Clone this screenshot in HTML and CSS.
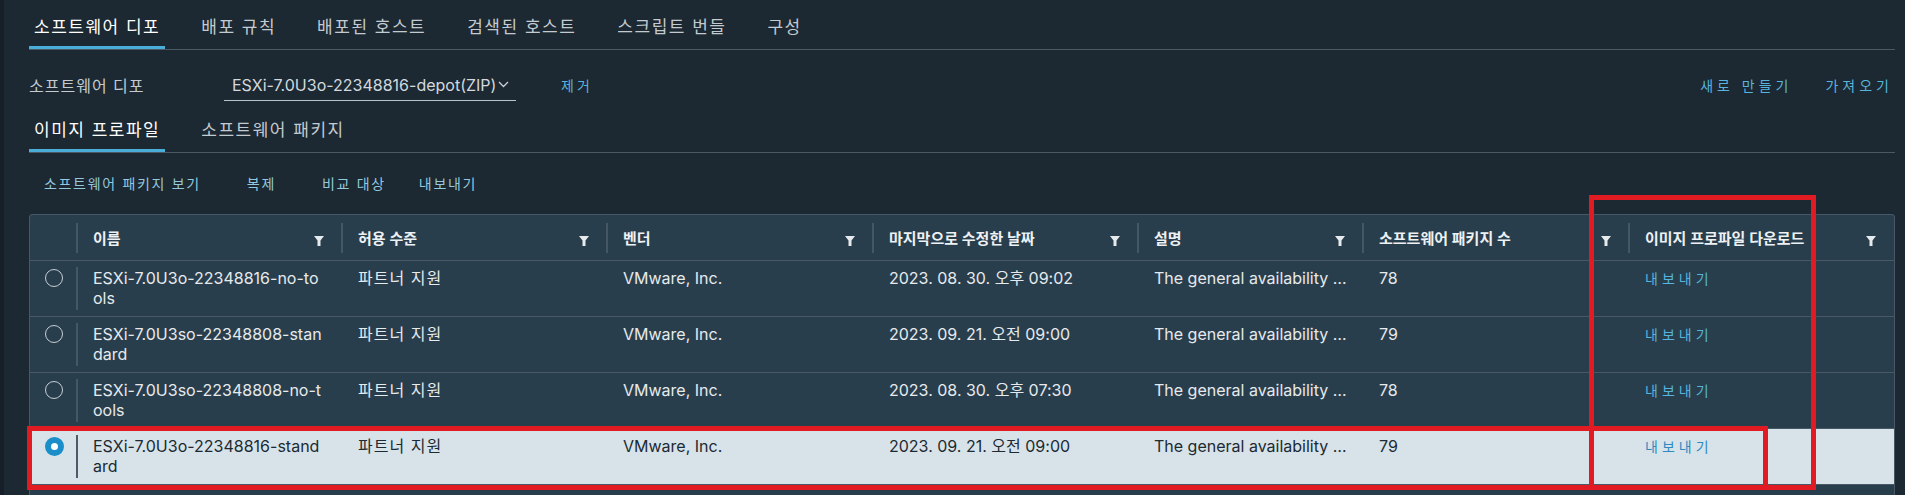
FILE: index.html
```html
<!DOCTYPE html>
<html lang="ko">

<head>
    <meta charset="UTF-8">
    <meta name="viewport" content="width=device-width, initial-scale=1.0">
    <title>이미지 빌더</title>
    <link rel="stylesheet" href="styles.css">
</head>

<body>
    <div class="page">
        <!-- 상단 탭 -->
        <nav class="tabs">
            <a class="tab active">소프트웨어 디포</a>
            <a class="tab">배포 규칙</a>
            <a class="tab">배포된 호스트</a>
            <a class="tab">검색된 호스트</a>
            <a class="tab">스크립트 번들</a>
            <a class="tab">구성</a>
        </nav>

        <div class="depot-row">
            <span class="depot-label">소프트웨어 디포</span>
            <div class="select">
                <span>ESXi-7.0U3o-22348816-depot(ZIP)</span>
                <svg width="11" height="7" viewBox="0 0 11 7"><path d="M1 1l4.5 4.5L10 1" fill="none" stroke="#c9d1d7" stroke-width="1.3"/></svg>
            </div>
            <a class="link remove">제거</a>
            <div class="depot-actions">
                <a class="link">새로 만들기</a>
                <a class="link">가져오기</a>
            </div>
        </div>

        <nav class="tabs sub">
            <a class="tab active">이미지 프로파일</a>
            <a class="tab">소프트웨어 패키지</a>
        </nav>

        <div class="actions">
            <a class="act first">소프트웨어 패키지 보기</a>
            <a class="act">복제</a>
            <a class="act">비교 대상</a>
            <a class="act last">내보내기</a>
        </div>

        <div class="datagrid">
            <div class="dg-head">
                <div class="hcell sel"></div>
                <div class="hcell">이름<i class="filter"></i></div>
                <div class="hcell">허용 수준<i class="filter"></i></div>
                <div class="hcell">벤더<i class="filter"></i></div>
                <div class="hcell">마지막으로 수정한 날짜<i class="filter"></i></div>
                <div class="hcell">설명<i class="filter"></i></div>
                <div class="hcell">소프트웨어 패키지 수<i class="filter"></i></div>
                <div class="hcell">이미지 프로파일 다운로드<i class="filter"></i></div>
            </div>

            <div class="dg-row">
                <div class="cell sel"><span class="radio"></span></div>
                <div class="cell">ESXi-7.0U3o-22348816-no-to<br>ols</div>
                <div class="cell ko">파트너 지원</div>
                <div class="cell">VMware, Inc.</div>
                <div class="cell">2023. 08. 30. 오후 09:02</div>
                <div class="cell">The general availability …</div>
                <div class="cell">78</div>
                <div class="cell"><a class="link">내보내기</a></div>
            </div>
            <div class="dg-row">
                <div class="cell sel"><span class="radio"></span></div>
                <div class="cell">ESXi-7.0U3so-22348808-stan<br>dard</div>
                <div class="cell ko">파트너 지원</div>
                <div class="cell">VMware, Inc.</div>
                <div class="cell">2023. 09. 21. 오전 09:00</div>
                <div class="cell">The general availability …</div>
                <div class="cell">79</div>
                <div class="cell"><a class="link">내보내기</a></div>
            </div>
            <div class="dg-row">
                <div class="cell sel"><span class="radio"></span></div>
                <div class="cell">ESXi-7.0U3so-22348808-no-t<br>ools</div>
                <div class="cell ko">파트너 지원</div>
                <div class="cell">VMware, Inc.</div>
                <div class="cell">2023. 08. 30. 오후 07:30</div>
                <div class="cell">The general availability …</div>
                <div class="cell">78</div>
                <div class="cell"><a class="link">내보내기</a></div>
            </div>
            <div class="dg-row selected">
                <div class="cell sel"><span class="radio checked"></span></div>
                <div class="cell">ESXi-7.0U3o-22348816-stand<br>ard</div>
                <div class="cell ko">파트너 지원</div>
                <div class="cell">VMware, Inc.</div>
                <div class="cell">2023. 09. 21. 오전 09:00</div>
                <div class="cell">The general availability …</div>
                <div class="cell">79</div>
                <div class="cell"><a class="link">내보내기</a></div>
            </div>
            <div class="dg-foot"></div>
        </div>

        <!-- 강조 표시 박스 -->
        <div class="mark mark-col"></div>
        <div class="mark mark-row"></div>
    </div>
</body>

</html>
```
FILE: styles.css
```css
body {
    margin: 0;
    background: #161f27;
    font-family: "Inter", "Noto Sans CJK KR", sans-serif;
    color: #e6eaed;
}

.page {
    position: relative;
    margin-left: 4px;
    padding: 0 10px 0 25px;
    height: 495px;
    overflow: hidden;
    background: #1c2832;
}

a {
    cursor: pointer;
}

/* 탭 */
.tabs {
    display: flex;
    gap: 31px;
    border-bottom: 1px solid #4b5965;
}

.tab {
    padding: 16px 5px 11px;
    font-size: 17px;
    line-height: 22px;
    letter-spacing: 1.5px;
    color: #c3cbd1;
}

.tab.active {
    color: #fff;
    box-shadow: inset 0 -3px 0 #49afd9;
}

.tabs.sub .tab {
    padding-top: 18px;
}

/* 디포 선택 줄 */
.depot-row {
    display: flex;
    align-items: center;
    margin-top: 19px;
    height: 32px;
}

.depot-label {
    width: 195px;
    font-size: 16px;
    letter-spacing: 1px;
    color: #c3cbd1;
}

.select {
    display: flex;
    align-items: center;
    gap: 2px;
    width: 284px;
    height: 31px;
    padding-left: 8px;
    border-bottom: 1px solid #b9c3ca;
    font-size: 16px;
    color: #d3d9de;
    white-space: nowrap;
}

.link {
    font-size: 14px;
    letter-spacing: 4px;
    color: #57b4dc;
}

.remove {
    margin-left: 45px;
    letter-spacing: 3px;
}

.depot-actions {
    display: flex;
    gap: 33px;
    margin-left: auto;
    padding-right: 2px;
}

/* 동작 버튼 */
.actions {
    display: flex;
    margin-top: 12px;
    height: 36px;
    align-items: center;
}

.act {
    padding: 0 23px;
    font-size: 14px;
    letter-spacing: .12em;
    color: #93c8df;
}

.act.first {
    padding-left: 15px;
}

.act.last {
    padding-left: 10px;
}

/* 데이터 그리드 */
.datagrid {
    margin-top: 13px;
    border: 1px solid #495865;
    border-radius: 3px;
    background: #293e4c;
}

.dg-head,
.dg-row {
    display: grid;
    grid-template-columns: 47px 265px 265px 266px 265px 225px 266px 1fr;
    border-bottom: 1px solid #495865;
}

.hcell {
    position: relative;
    display: flex;
    align-items: center;
    height: 45px;
    padding-left: 16px;
    font-size: 15px;
    font-weight: 600;
    color: #eef1f3;
}

.hcell::before {
    content: "";
    position: absolute;
    left: -1px;
    top: 8px;
    bottom: 7px;
    width: 2px;
    background: #465764;
}

.hcell.sel::before {
    display: none;
}

.filter {
    position: absolute;
    right: 18px;
    top: 21px;
    width: 10px;
    height: 10px;
    background: #e6eaed;
    clip-path: polygon(0 0, 100% 0, 65% 45%, 65% 100%, 35% 100%, 35% 45%);
}

.dg-row {
    height: 55px;
}

.cell {
    position: relative;
    padding: 7px 16px 0;
    font-size: 16px;
    line-height: 20px;
    white-space: nowrap;
}

.cell.ko {
    letter-spacing: 1px;
}

.cell.sel {
    padding: 8px 0 0 15px;
}

.cell.sel::after {
    content: "";
    position: absolute;
    right: -1px;
    top: 6px;
    bottom: 6px;
    width: 2px;
    background: #465764;
}

.radio {
    display: block;
    width: 16px;
    height: 16px;
    border: 1.5px solid #c6cdd3;
    border-radius: 50%;
}

.radio.checked {
    width: 7px;
    height: 7px;
    border: 6px solid #1a8ec8;
    background: #fff;
}

.dg-row.selected {
    background: #d8e3e9;
    color: #1c2a33;
}

.dg-row.selected .cell.sel::after {
    background: #4d5b66;
}

.dg-row.selected .link {
    color: #2c8ac1;
}

.dg-foot {
    height: 40px;
}

/* 빨간 강조 박스 */
.mark {
    position: absolute;
    border: 5px solid #e21b23;
    pointer-events: none;
}

.mark-col {
    left: 1585px;
    top: 195px;
    width: 217px;
    height: 285px;
}

.mark-row {
    left: 23px;
    top: 426px;
    width: 1731px;
    height: 54px;
}
```
